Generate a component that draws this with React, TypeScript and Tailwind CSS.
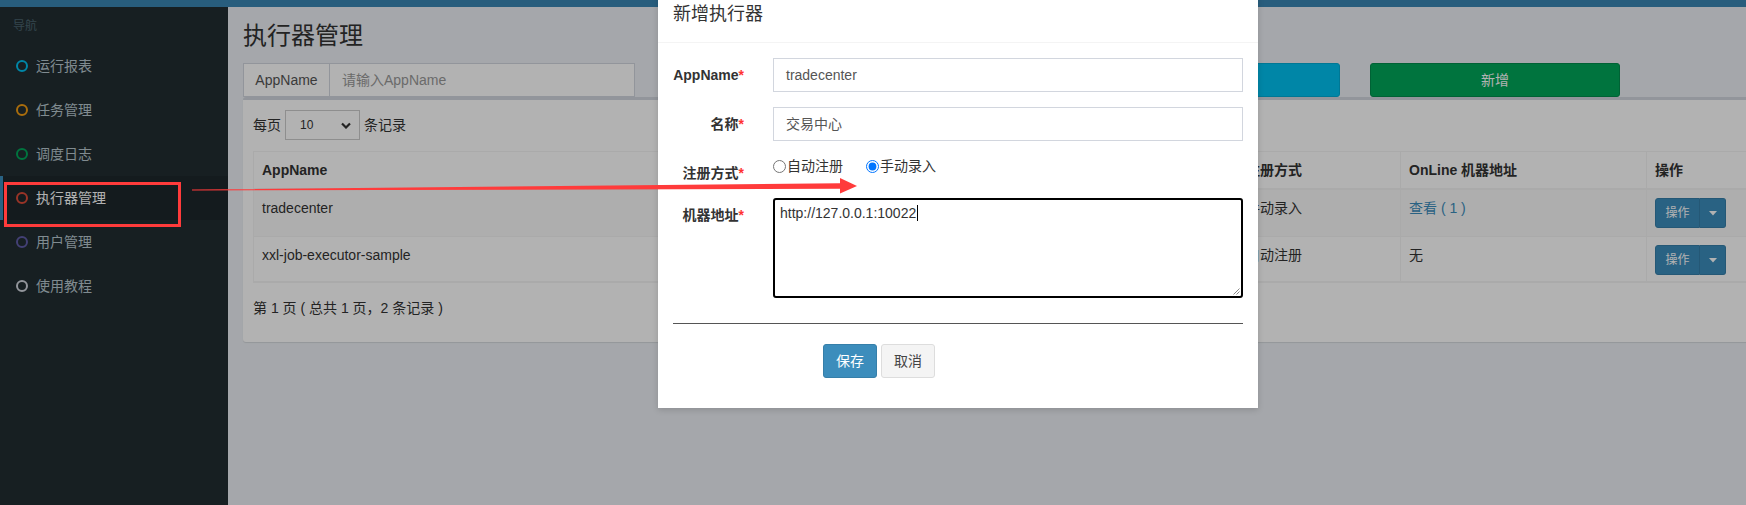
import React from "react";

const menu = [
  { label: "运行报表", ring: "border-[#00c0ef]" },
  { label: "任务管理", ring: "border-[#f39c12]" },
  { label: "调度日志", ring: "border-[#00a65a]" },
  { label: "执行器管理", ring: "border-[#dd4b39]", active: true },
  { label: "用户管理", ring: "border-[#605ca8]" },
  { label: "使用教程", ring: "border-[#d2d6de]" },
];

const rows = [
  { app: "tradecenter", name: "交易中心", type: "手动录入", online: "查看 ( 1 )", link: true, h: "h-[47px]" },
  { app: "xxl-job-executor-sample", name: "示例执行器", type: "自动注册", online: "无", link: false, h: "h-[45px]" },
];

function OpButton() {
  return (
    <div className="flex h-[30px] w-[71px] text-[12px] text-white">
      <div className="flex w-[45px] items-center justify-center rounded-l-[3px] border border-[#367fa9] bg-[#3c8dbc]">
        操作
      </div>
      <div className="flex w-[26px] items-center justify-center rounded-r-[3px] border border-l-0 border-[#367fa9] bg-[#3c8dbc]">
        <svg width="8" height="5" viewBox="0 0 8 5">
          <path d="M0 0h8L4 4.5z" fill="#fff" />
        </svg>
      </div>
    </div>
  );
}

function Label({ text }: { text: string }) {
  return (
    <div className="w-[100px] shrink-0 pr-[14px] pt-[7px] text-right text-[14px] font-bold leading-[20px] text-[#333]">
      {text}
      <span className="text-[#f33]">*</span>
    </div>
  );
}

export default function App() {
  return (
    <div className="relative h-[505px] w-[1746px] overflow-hidden bg-[#ecf0f5] font-['Liberation_Sans','Noto_Sans_CJK_SC',sans-serif] text-[14px] text-[#333]">
      <div className="h-[7px] bg-[#3a86b4]" />
      <div className="flex h-[498px]">
        {/* sidebar */}
        <aside className="w-[228px] shrink-0 bg-[#222d32]">
          <div className="flex h-[37px] items-center pl-[13px] text-[12px] text-[#4b646f]">导航</div>
          {menu.map((m) => (
            <div
              key={m.label}
              className={
                m.active
                  ? "flex h-[44px] items-center border-l-[3px] border-[#3c8dbc] bg-[#1e282c] pl-[13px] text-white"
                  : "flex h-[44px] items-center border-l-[3px] border-transparent pl-[13px] text-[#b8c7ce]"
              }
            >
              <span className={"h-[12px] w-[12px] rounded-full border-2 " + m.ring} />
              <span className="ml-[8px]">{m.label}</span>
            </div>
          ))}
        </aside>

        {/* content */}
        <main className="min-w-0 flex-1 overflow-hidden px-[15px] pt-[16px]">
          <h1 className="text-[24px] leading-[26px] text-[#333]">执行器管理</h1>

          <div className="mt-[14px] flex h-[34px]">
            <div className="flex w-[392px]">
              <div className="flex w-[87px] items-center justify-center border border-[#d2d6de] bg-white text-[#555]">
                AppName
              </div>
              <div className="flex flex-1 items-center border border-l-0 border-[#d2d6de] bg-white pl-[12px] text-[#999]">
                请输入AppName
              </div>
            </div>
            <div className="ml-[455px] flex w-[250px] items-center justify-center rounded-[3px] border border-[#00acd6] bg-[#00c0ef] text-white">
              搜索
            </div>
            <div className="ml-[30px] flex w-[250px] items-center justify-center rounded-[3px] border border-[#008d4c] bg-[#00a65a] text-white">
              新增
            </div>
          </div>

          <div className="w-[1560px] rounded-[3px] border-t-[3px] border-[#d2d6de] bg-white p-[10px] shadow-[0_1px_1px_rgba(0,0,0,0.1)]">
            <div className="flex h-[30px] items-center">
              <span>每页</span>
              <div className="mx-[4px] flex h-[30px] w-[75px] items-center justify-between border border-[#ccc] bg-white pl-[14px] pr-[8px] text-[12px]">
                <span>10</span>
                <svg width="10" height="7" viewBox="0 0 10 7">
                  <path d="M1 1.5l4 4 4-4" stroke="#333" strokeWidth="2.2" fill="none" />
                </svg>
              </div>
              <span>条记录</span>
            </div>

            <div className="mt-[11px] w-[1537px] border border-[#f4f4f4]">
              <div className="flex h-[38px] border-b-2 border-[#f4f4f4] font-bold">
                <div className="w-[492px] border-r border-[#f4f4f4] px-[8px] pt-[8px] leading-[20px]">AppName</div>
                <div className="w-[492px] border-r border-[#f4f4f4] px-[8px] pt-[8px] leading-[20px]">名称</div>
                <div className="w-[163px] border-r border-[#f4f4f4] px-[8px] pt-[8px] leading-[20px]">注册方式</div>
                <div className="w-[246px] border-r border-[#f4f4f4] px-[8px] pt-[8px] leading-[20px]">OnLine 机器地址</div>
                <div className="flex-1 px-[8px] pt-[8px] leading-[20px]">操作</div>
              </div>
              {rows.map((r, i) => (
                <div
                  key={r.app}
                  className={"flex border-b border-[#f4f4f4] " + r.h + (i === 0 ? " bg-[#f9f9f9]" : "")}
                >
                  <div className="w-[492px] border-r border-[#f4f4f4] px-[8px] pt-[8px] leading-[20px]">{r.app}</div>
                  <div className="w-[492px] border-r border-[#f4f4f4] px-[8px] pt-[8px] leading-[20px]">{r.name}</div>
                  <div className="w-[163px] border-r border-[#f4f4f4] px-[8px] pt-[8px] leading-[20px]">{r.type}</div>
                  <div className={"w-[246px] border-r border-[#f4f4f4] px-[8px] pt-[8px] leading-[20px]" + (r.link ? " text-[#3c8dbc]" : "")}>
                    {r.online}
                  </div>
                  <div className="flex-1 px-[8px] pt-[8px]">
                    <OpButton />
                  </div>
                </div>
              ))}
            </div>

            <div className="mb-[14px] mt-[15px] leading-[20px]">第 1 页 ( 总共 1 页，2 条记录 )</div>
          </div>
        </main>
      </div>

      {/* modal backdrop */}
      <div className="absolute inset-0 bg-black/30" />

      {/* modal */}
      <div className="absolute left-[658px] top-[-13px] w-[600px] bg-white pb-[30px] shadow-[0_2px_6px_rgba(0,0,0,0.15)]">
        <div className="border-b border-[#f4f4f4] p-[15px]">
          <h4 className="text-[18px] leading-[25px] text-[#333]">新增执行器</h4>
        </div>
        <div className="pt-[15px]">
          <div className="mb-[15px] flex">
            <Label text="AppName" />
            <div className="ml-[15px] flex h-[34px] w-[470px] items-center border border-[#d2d6de] px-[12px] text-[#555]">
              tradecenter
            </div>
          </div>
          <div className="mb-[15px] flex">
            <Label text="名称" />
            <div className="ml-[15px] flex h-[34px] w-[470px] items-center border border-[#d2d6de] px-[12px] text-[#555]">
              交易中心
            </div>
          </div>
          <div className="mb-[15px] flex h-[27px]">
            <Label text="注册方式" />
            <div className="ml-[15px] flex h-[20px] items-center pt-[1px] text-[#333]">
              <input type="radio" name="addressType" className="m-0 h-[13px] w-[13px]" />
              <span className="ml-[1px]">自动注册</span>
              <input type="radio" name="addressType" defaultChecked className="m-0 ml-[23px] h-[13px] w-[13px]" />
              <span className="ml-[1px]">手动录入</span>
            </div>
          </div>
          <div className="flex">
            <Label text="机器地址" />
            <div className="relative ml-[15px] h-[100px] w-[470px] rounded-[3px] border-2 border-black px-[5px] pt-[3px] leading-[20px] text-[#333]">
              <span>http://127.0.0.1:10022</span>
              <span className="ml-px inline-block h-[16px] w-px bg-black align-[-3px]" />
              <svg className="absolute bottom-[1px] right-[1px]" width="8" height="8" viewBox="0 0 8 8">
                <path d="M7.5 1.5L1.5 7.5M7.5 4.5L4.5 7.5" stroke="#888" strokeWidth="1" />
              </svg>
            </div>
          </div>
          <div className="mx-[15px] mt-[25px] h-px bg-[#555]" />
          <div className="ml-[165px] mt-[20px] flex h-[34px]">
            <div className="flex items-center rounded-[3px] border border-[#367fa9] bg-[#3c8dbc] px-[12px] text-white">保存</div>
            <div className="ml-[4px] flex items-center rounded-[3px] border border-[#ddd] bg-[#f4f4f4] px-[12px] text-[#444]">取消</div>
          </div>
        </div>
      </div>

      {/* annotation */}
      <div className="absolute left-[4px] top-[182px] h-[45px] w-[177px] border-[3px] border-[#ff3b3b]" />
      <svg className="pointer-events-none absolute left-0 top-0" width="1746" height="505">
        <polygon
          points="192,189.5 840,183.2 840,178 857,186 840,193.5 840,188.8 192,190.5"
          fill="#ff3b3b"
        />
      </svg>
    </div>
  );
}
